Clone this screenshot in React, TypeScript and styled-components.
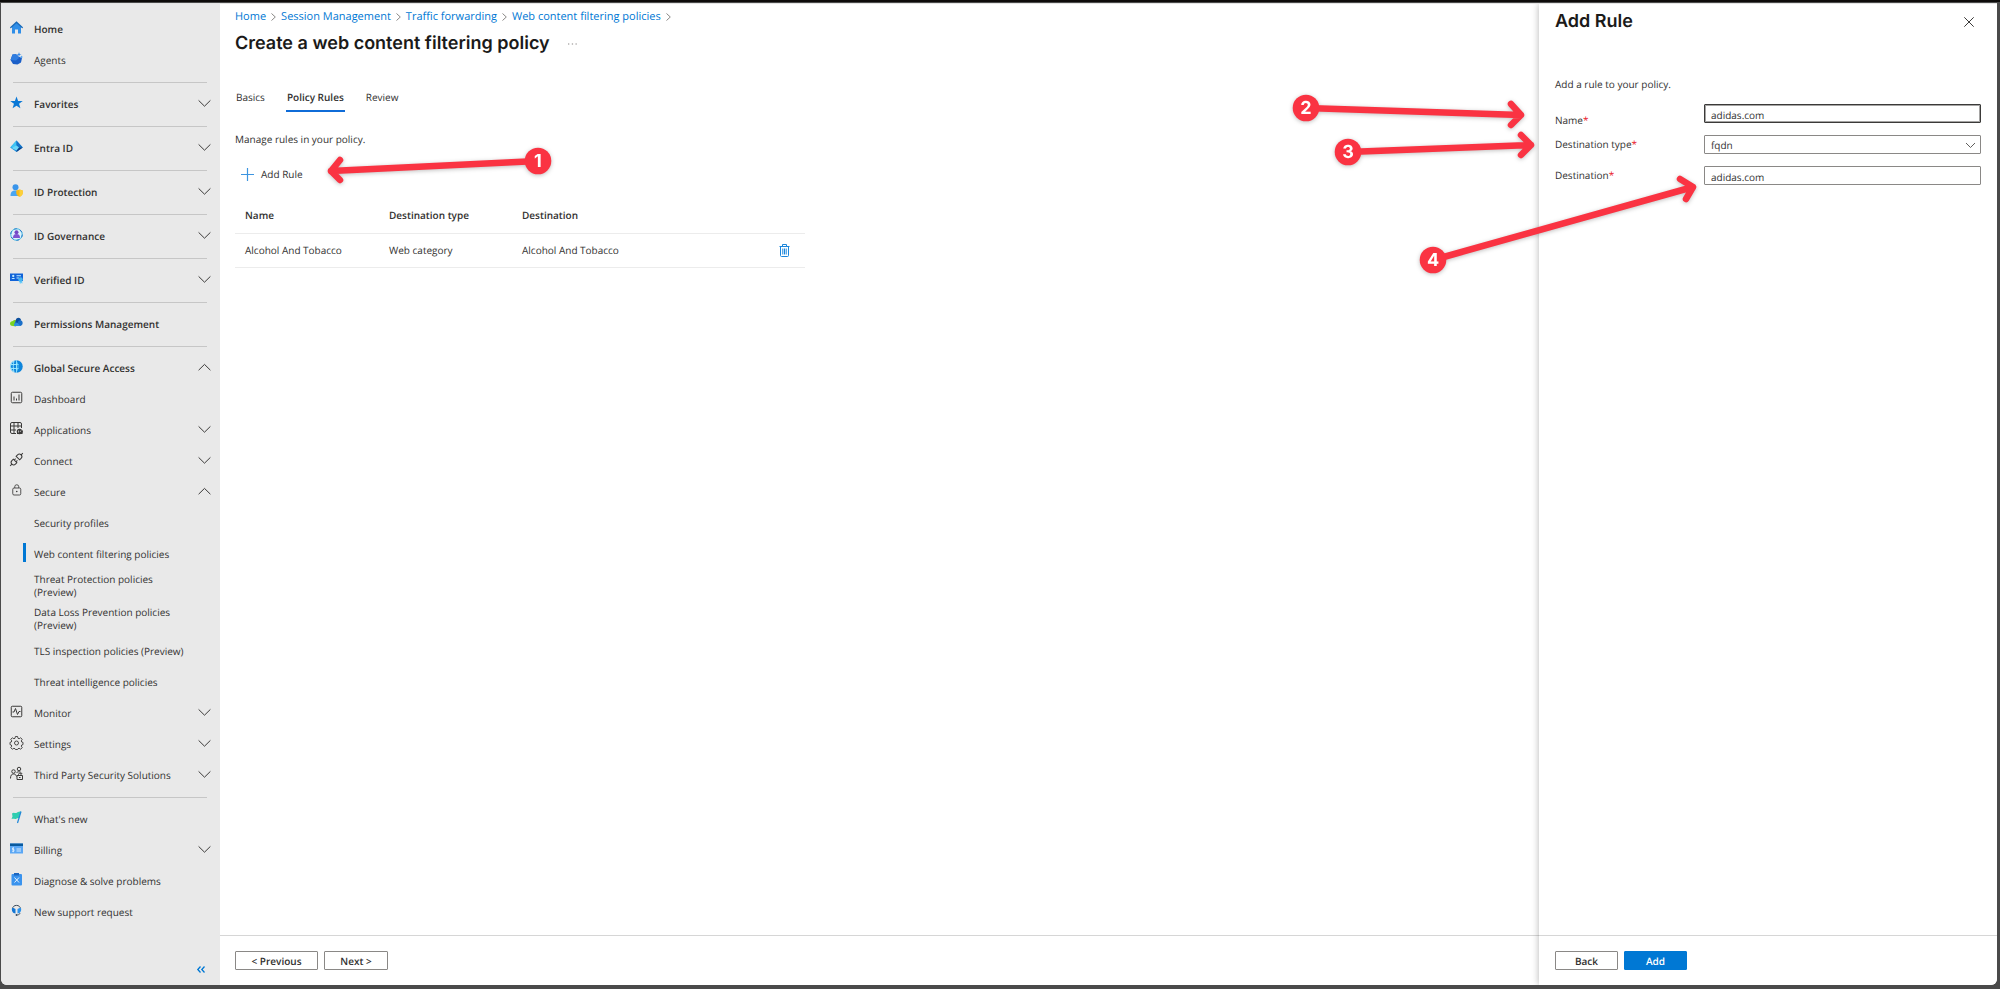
import React, { ReactNode } from "react";
import styled, { createGlobalStyle, css } from "styled-components";

const GlobalStyle = createGlobalStyle`
  *, *::before, *::after { box-sizing: border-box; }
  body {
    margin: 0;
    background: #2b2a29;
    color: #323130;
    font-family: "Open Sans", "Noto Sans", sans-serif;
    font-size: 10px;
    line-height: 13px;
    text-rendering: geometricPrecision;
  }
  button, input, select { font: inherit; color: inherit; text-rendering: inherit; }
`;

const Frame = styled.div`
  min-height: 100vh;
  padding: 3px 3px 4px 1px;
  display: flex;
  background: linear-gradient(#0d0b0a 0 2px, #4a4a4a 2px 100%);
`;

const Shell = styled.div`
  flex: 1;
  min-width: 0;
  display: flex;
  background: #fff;
  border-top: 1px solid #e4e4e4;
  border-radius: 0 0 6px 6px;
  overflow: hidden;
  position: relative;
`;

/* ---------- Sidebar ---------- */

const Sidebar = styled.nav`
  flex: 0 0 219px;
  display: flex;
  flex-direction: column;
  background: #e9e9e9;
  padding: 9px 9px 8px;
`;

const NavList = styled.ul`
  list-style: none;
  margin: 0;
  padding: 0;
`;

const NavItem = styled.li<{ $divided?: boolean }>`
  ${(p) =>
    p.$divided &&
    css`
      &::before {
        content: "";
        display: block;
        height: 1px;
        margin: 7px 4px 5px 3px;
        background: #c6c6c6;
      }
    `}
`;

const NavLink = styled.a<{ $strong?: boolean; $active?: boolean }>`
  display: flex;
  align-items: center;
  min-height: 31px;
  padding: 3px 0;
  color: #323130;
  text-decoration: none;
  font-weight: ${(p) => (p.$strong ? 600 : 400)};
  position: relative;
  ${(p) =>
    p.$active &&
    css`
      &::before {
        content: "";
        position: absolute;
        left: 13px;
        top: 5px;
        width: 3px;
        height: 19px;
        background: #0078d4;
      }
    `}
`;

const IconSlot = styled.span`
  flex: 0 0 13px;
  height: 15px;
  margin-right: 11px;
`;

const NavText = styled.span`
  flex: 1;
  padding-top: 1px;
`;

const CollapseButton = styled.button`
  margin: auto 2px 0 auto;
  padding: 4px;
  border: 0;
  background: none;
  display: flex;
`;

const Svg = styled.svg`
  display: block;
  overflow: visible;
`;

const Icon = ({ children, size = 13 }: { children: ReactNode; size?: number }) => (
  <Svg width={size} height={size} viewBox="0 0 26 26" fill="none" aria-hidden="true">
    {children}
  </Svg>
);

const Chevron = ({ up }: { up?: boolean }) => (
  <Svg width="13" height="10" viewBox="0 0 13 10" fill="none" stroke="#3b3a39" aria-hidden="true">
    <path d={up ? "M.6 7.2 6.5 1.4l5.9 5.8" : "M.6 1.4 6.5 7.2l5.9-5.8"} />
  </Svg>
);

const line = { stroke: "#3b3a39", strokeWidth: 2 };

const icons: Record<string, ReactNode> = {
  home: (
    <Icon>
      <path d="M4 11 13 3l9 8v14h-6v-8h-6v8H4z" fill="#2f8ee8" />
      <path d="M1.5 13 13 2.5 24.5 13" stroke="#1668b8" strokeWidth="2.6" strokeLinecap="round" />
    </Icon>
  ),
  agents: (
    <Icon>
      <path d="m5 5 9-1 5 6 5 2-2 9-7 4-9-1-5-8z" fill="#1b5fc8" />
      <path d="m5 5 9-1 4 8-6 5-11-1z" fill="#2f7de0" />
      <path d="m18 0 1.500 3.500L23 5l-3.500 1.500L18 10l-1.500-3.500L13 5l3.500-1.500z" fill="#2f86ea" stroke="#e9e9e9" strokeWidth=".8" />
      <path d="m23 7 1 2 2 1-2 1-1 2-1-2-2-1 2-1z" fill="#49a0f2" />
    </Icon>
  ),
  star: (
    <Icon>
      <path d="m13 1 3.200 8.800 9.300.2-7.400 5.600 2.700 9L13 19.300l-7.800 5.300 2.700-9L.5 10l9.300-.2z" fill="#0a78d6" />
    </Icon>
  ),
  entra: (
    <Icon>
      <path d="M13 1 25.500 15 13 24 .5 15z" fill="#1b8fe0" />
      <path d="M13 1v14L.5 15z" fill="#3fc4f4" />
      <path d="m13 1 12.500 14L13 15z" fill="#1673c8" />
      <path d="M13 15h12.500L13 24z" fill="#0b3f87" />
      <path d="m3 16 10-5 5 4-5 6z" fill="#6ad6f8" />
    </Icon>
  ),
  protection: (
    <Icon>
      <circle cx="11" cy="6.500" r="6" fill="#3a95ea" />
      <path d="M1 24c0-8 3-11 10-11s8 5 8 11z" fill="#49a6f2" />
      <path d="m19 11 6.500 2v5c0 4-3 6-6.500 7.500C15.500 24 12.500 22 12.500 18v-5z" fill="#f9b716" />
      <path d="m19 11 6.500 2v5c0 4-3 6-6.500 7.500z" fill="#fcd03a" />
    </Icon>
  ),
  governance: (
    <Icon>
      <circle cx="13" cy="13" r="11.500" fill="#dff3fb" stroke="#3eb8e4" strokeWidth="2" />
      <circle cx="13" cy="13" r="11.500" stroke="#2a7ac8" strokeWidth="2" strokeDasharray="6 6" />
      <circle cx="13" cy="8.500" r="4" fill="#7446c4" />
      <path d="M6 20c0-5 2-8 7-8s7 3 7 8z" fill="#7f52d0" />
    </Icon>
  ),
  verified: (
    <Icon>
      <path d="M0 3h26v15H0z" fill="#0f62d8" />
      <circle cx="6.500" cy="8" r="2.300" fill="#bfeaff" />
      <path d="M3 14c0-3 7-3 7 0zM13 6.500h9v2h-9zM13 11h5v2h-5z" fill="#bfeaff" />
      <path d="m18 17 2 7 2-2 3 1-1-7z" fill="#6fcdf8" />
      <circle cx="21" cy="15" r="4.500" fill="#45b4f0" />
    </Icon>
  ),
  permissions: (
    <Icon>
      <path d="M6 20C1 20 0 17 0 15c0-3 3-5 6-5 2-4 10-2 9 3l-3 8z" fill="#79d321" />
      <path d="M10 20c-2-5 0-9 2-11 2-4 8-4 10 0 4 1 4 7 2 9l-3 2z" fill="#1b6fc8" />
      <path d="M13 5c4-3 8-1 9 3-4 0-6 2-7 6-4-1-5-5-2-9z" fill="#0d4f9e" />
      <path d="M8 20c-1-5 3-7 7-6l6 6z" fill="#2f8ee0" />
    </Icon>
  ),
  global: (
    <Icon>
      <circle cx="13" cy="13" r="12.500" fill="#0f86dc" />
      <path d="M8 1.800A12.500 12.500 0 0 0 8 24.300M13 .5v25M1 9h16M1 17h16M8 2c-2 7-2 15 0 22" stroke="#a6ecff" strokeWidth="1.800" />
      <path d="M13 3c4 6 4 14 0 20" stroke="#6bd0f6" strokeWidth="1.600" />
    </Icon>
  ),
  dashboard: (
    <Icon>
      <rect x="2.500" y="2.500" width="21" height="21" rx="2.500" {...line} />
      <path d="M8 11v8M13 15v4M18 7v12" {...line} />
    </Icon>
  ),
  applications: (
    <Icon>
      <path d="M12 23H4a3 3 0 0 1-3-3V4a3 3 0 0 1 3-3h16a3 3 0 0 1 3 3v8M8 1v22M16 1v11M1 8h22M1 16h11" {...line} />
      <path d="M16 17h-2v7h11l1-7h-3" fill="#3b3a39" />
      <circle cx="19" cy="19" r="5.500" fill="#3b3a39" />
      <path d="M17 21v-4M20 20l2-3" stroke="#e9e9e9" strokeWidth="1.400" />
    </Icon>
  ),
  connect: (
    <Icon>
      <g transform="rotate(45 13 13)" {...line}>
        <path d="M8 9h10V5a5 5 0 0 0-10 0zM13 0v-5M8 17h10v4a5 5 0 0 1-10 0zM13 26v5M10.500 17v-4M15.500 17v-4" />
      </g>
    </Icon>
  ),
  secure: (
    <Icon>
      <rect x="5.500" y="8" width="16" height="14" rx="2.500" {...line} strokeWidth={1.700} />
      <path d="M9.500 8V5.500a4 4 0 0 1 8 0V8" {...line} strokeWidth={1.700} />
      <circle cx="13.500" cy="15" r="1.600" fill="#3b3a39" />
    </Icon>
  ),
  monitor: (
    <Icon>
      <rect x="2.500" y="2.500" width="21" height="21" rx="2" {...line} />
      <path d="M5 14h3l3-7 4 12 3-6h3" {...line} />
    </Icon>
  ),
  settings: (
    <Icon>
      <path
        d="M10.800 1h4.400l.8 3.600 2.200.9 3.100-2 3.200 3.200-2 3.100.9 2.200 2.600.8v4.400l-2.600.8-.9 2.200 2 3.100-3.200 3.200-3.100-2-2.200.9-.8 1.600h-4.400l-.8-1.600-2.200-.9-3.100 2-3.200-3.200 2-3.100-.9-2.200L0 17.200v-4.400l2.600-.8.9-2.200-2-3.100 3.200-3.200 3.100 2 2.200-.9z"
        stroke="#3b3a39"
        strokeWidth="1.800"
        strokeLinejoin="round"
      />
      <circle cx="13" cy="14" r="4" stroke="#3b3a39" strokeWidth="1.800" />
    </Icon>
  ),
  thirdparty: (
    <Icon>
      <circle cx="7" cy="9" r="3.500" {...line} />
      <circle cx="18" cy="4" r="3.500" {...line} />
      <path d="M1 23c0-6 2-9 6-9s5 2 6 5M13 12c1-3 9-4 11 2" {...line} />
      <path d="M14 17h11v8H14zM17 17v-2a2.500 2.500 0 0 1 5 0v2" {...line} />
      <path d="M18 21h3" {...line} />
    </Icon>
  ),
  whatsnew: (
    <Icon>
      <path d="M4 5c4-4 7 1 10-2 3-2 5-2 8-2l-4 13c-5-1-5 3-8 2s-5 0-7 0l2-5z" fill="#2fcdb0" />
      <path d="m22 1-7 23" stroke="#1f87d8" strokeWidth="2.400" />
    </Icon>
  ),
  billing: (
    <Icon>
      <path d="M0 3h26v20H0z" fill="#5aa7f5" />
      <path d="M0 3h26v5H0z" fill="#0a5a9e" />
      <path d="M13 13h9v2h-9zM13 17h9v2h-9z" fill="#d6ecff" />
      <path d="M8 12H5v3h3v3.500H4M6.500 10.500v10" stroke="#e8f4ff" strokeWidth="1.500" />
    </Icon>
  ),
  diagnose: (
    <Icon>
      <rect x="3" y="2" width="21" height="23" rx="2" fill="#3a93ee" />
      <path d="M8 0h10v5H8z" fill="#1d66c0" />
      <path d="m9 9 9 10M18 9 9 19" stroke="#e6f3ff" strokeWidth="2" />
    </Icon>
  ),
  support: (
    <Icon>
      <path d="M5 11C4 0 22 0 21 11" stroke="#3b4a5a" strokeWidth="2" />
      <path d="M4 8h3l4 2v9l-4-1c-3-2-4-7-3-10z" fill="#1476d4" />
      <path d="M22 8h-3l-4 2v9l4-1c3-2 4-7 3-10z" fill="#2f93ea" />
      <path d="M20 18c0 3-3 4-7 4" stroke="#3b4a5a" strokeWidth="1.600" />
      <circle cx="13" cy="22" r="1.800" fill="#3b4a5a" />
    </Icon>
  ),
};

type NavEntry = {
  label: ReactNode;
  icon?: string;
  strong?: boolean;
  divided?: boolean;
  active?: boolean;
  chevron?: "up" | "down";
};

const entries: NavEntry[] = [
  { label: "Home", icon: "home", strong: true },
  { label: "Agents", icon: "agents" },
  { label: "Favorites", icon: "star", strong: true, divided: true, chevron: "down" },
  { label: "Entra ID", icon: "entra", strong: true, divided: true, chevron: "down" },
  { label: "ID Protection", icon: "protection", strong: true, divided: true, chevron: "down" },
  { label: "ID Governance", icon: "governance", strong: true, divided: true, chevron: "down" },
  { label: "Verified ID", icon: "verified", strong: true, divided: true, chevron: "down" },
  { label: "Permissions Management", icon: "permissions", strong: true, divided: true },
  { label: "Global Secure Access", icon: "global", strong: true, divided: true, chevron: "up" },
  { label: "Dashboard", icon: "dashboard" },
  { label: "Applications", icon: "applications", chevron: "down" },
  { label: "Connect", icon: "connect", chevron: "down" },
  { label: "Secure", icon: "secure", chevron: "up" },
  { label: "Security profiles" },
  { label: "Web content filtering policies", active: true },
  { label: <>Threat Protection policies<br />(Preview)</> },
  { label: <>Data Loss Prevention policies<br />(Preview)</> },
  { label: "TLS inspection policies (Preview)" },
  { label: "Threat intelligence policies" },
  { label: "Monitor", icon: "monitor", chevron: "down" },
  { label: "Settings", icon: "settings", chevron: "down" },
  { label: "Third Party Security Solutions", icon: "thirdparty", chevron: "down" },
  { label: "What's new", icon: "whatsnew", divided: true },
  { label: "Billing", icon: "billing", chevron: "down" },
  { label: "Diagnose & solve problems", icon: "diagnose" },
  { label: "New support request", icon: "support" },
];

/* ---------- Main ---------- */

const Column = styled.div`
  display: flex;
  flex-direction: column;
`;

const Main = styled(Column).attrs({ as: "main" })`
  flex: 1;
  min-width: 0;
  position: relative;
`;

const MainBody = styled.div`
  flex: 1;
  padding: 5px 15px 0;
`;

const Breadcrumbs = styled.nav`
  display: flex;
  align-items: center;
  gap: 5px;
  font-size: 11px;
  line-height: 15px;
  a { color: #0078d4; text-decoration: none; }
`;

const TitleRow = styled.div`
  display: flex;
  align-items: center;
  gap: 18px;
  margin-top: 9px;
`;

const Title = styled.h1`
  margin: 0;
  font: 600 18px/22px Inter, sans-serif;
  color: #1b1a19;
`;

const PlainButton = styled.button`
  display: inline-flex;
  align-items: center;
  padding: 0;
  border: 0;
  background: none;
  vertical-align: middle;
  cursor: pointer;
`;

const Tabs = styled.div`
  display: flex;
  gap: 20px;
  margin: 35px 0 21px;
`;

const Tab = styled(PlainButton)<{ $selected?: boolean }>`
  height: 22px;
  padding: 0 1px 5px;
  border-bottom: 2px solid ${(p) => (p.$selected ? "#0f6cd8" : "transparent")};
  font-weight: ${(p) => (p.$selected ? 600 : 400)};
`;

const Paragraph = styled.p`
  margin: 0;
`;

const AddRule = styled(PlainButton)`
  gap: 7px;
  margin: 15px 0 0 6px;
  height: 26px;
`;

const RulesTable = styled.table`
  width: 570px;
  margin-top: 12px;
  border-collapse: collapse;
  table-layout: fixed;
  th, td {
    height: 34px;
    padding: 0 10px;
    border-bottom: 1px solid #ececec;
    text-align: left;
    font-weight: 400;
  }
  th { font-weight: 600; }
`;

const Footer = styled.footer<{ $inset: number }>`
  display: flex;
  gap: 6px;
  height: 50px;
  padding: 15px ${(p) => p.$inset}px 0;
  border-top: 1px solid #d6d6d6;
`;

const ActionButton = styled.button<{ $primary?: boolean; $width: number }>`
  width: ${(p) => p.$width}px;
  height: 19px;
  padding: 1px 0 0;
  border: 1px solid ${(p) => (p.$primary ? "#0078d4" : "#8a8886")};
  border-radius: 1px;
  background: ${(p) => (p.$primary ? "#0078d4" : "#fff")};
  color: ${(p) => (p.$primary ? "#fff" : "#323130")};
  font-weight: 600;
  line-height: 15px;
`;

/* ---------- Panel ---------- */

const Panel = styled(Column).attrs({ as: "aside" })`
  flex: 0 0 458px;
  background: #fff;
  position: relative;
  box-shadow: 0 0 7px rgba(0, 0, 0, 0.3);
`;

const PanelBody = styled.div`
  flex: 1;
  padding: 7px 16px 0;
`;

const PanelHeader = styled.header`
  display: flex;
  align-items: center;
  justify-content: space-between;
  padding-right: 7px;
  margin-bottom: 45px;
`;

const Form = styled.form`
  display: flex;
  flex-direction: column;
  gap: 12px;
  margin-top: 13px;
`;

const Field = styled.div`
  display: flex;
  align-items: center;
  height: 19px;
  label { flex: 0 0 149px; }
`;

const LowLabel = styled.label`
  padding-top: 14px;
`;

const Required = styled.span`
  color: #e81123;
`;

const control = css`
  flex: 1;
  min-width: 0;
  width: 100%;
  height: 19px;
  padding: 2px 6px 0;
  border: 1px solid #8a8886;
  border-radius: 1px;
  background: #fff;
  outline: 0;
`;

const TextInput = styled.input<{ $focused?: boolean }>`
  ${control}
  ${(p) =>
    p.$focused &&
    css`
      border-color: #3b3a39;
      box-shadow: inset 0 0 0 1px #a5a4a3;
    `}
`;

const SelectWrap = styled.div`
  flex: 1;
  position: relative;
  svg { position: absolute; right: 6px; top: 6px; pointer-events: none; }
`;

const Select = styled.select`
  ${control}
  display: block;
  appearance: none;
`;

/* ---------- Callouts ---------- */

const Callout = styled.svg`
  position: absolute;
  overflow: visible;
  pointer-events: none;
  filter: drop-shadow(0 1px 2px rgba(0, 0, 0, 0.25));
  z-index: 2;
  text {
    font: 700 18px Inter, sans-serif;
    fill: #fff;
    text-anchor: middle;
  }
`;

const LeftCallout = styled(Callout)`
  left: 0;
  top: 0;
`;

const RightCallout = styled(Callout)`
  right: 0;
  top: 0;
`;

const Arrow = ({ n, from, to, wings }: { n: number; from: [number, number]; to: [number, number]; wings: [number, number][] }) => (
  <g>
    <path
      d={`M${from} L${to} M${wings[0]} L${to} L${wings[1]}`}
      fill="none"
      stroke="#fa3342"
      strokeWidth="6.500"
      strokeLinecap="round"
      strokeLinejoin="round"
    />
    <circle cx={from[0]} cy={from[1]} r="13.300" fill="#fa3342" />
    <text x={from[0]} y={from[1] + 6}>{n}</text>
  </g>
);

const crumbs = ["Home", "Session Management", "Traffic forwarding", "Web content filtering policies"];

export default function App() {
  return (
    <>
      <GlobalStyle />
      <Frame>
        <Shell>
          <Sidebar aria-label="Entra navigation">
            <NavList>
              {entries.map((e, i) => (
                <NavItem key={i} $divided={e.divided}>
                  <NavLink href="#" $strong={e.strong} $active={e.active}>
                    <IconSlot>{e.icon && icons[e.icon]}</IconSlot>
                    <NavText>{e.label}</NavText>
                    {e.chevron && <Chevron up={e.chevron === "up"} />}
                  </NavLink>
                </NavItem>
              ))}
            </NavList>
            <CollapseButton aria-label="Collapse menu">
              <Svg width="8" height="7" viewBox="0 0 8 7" fill="none" stroke="#0078d4" strokeWidth="1.300">
                <path d="M3.500.5.800 3.500l2.700 3M7.500.5 4.800 3.500l2.700 3" />
              </Svg>
            </CollapseButton>
          </Sidebar>

          <Main>
            <MainBody>
              <Breadcrumbs aria-label="Breadcrumb">
                {crumbs.map((c) => (
                  <React.Fragment key={c}>
                    <a href="#">{c}</a>
                    <Svg width="5" height="8" viewBox="0 0 5 8" fill="none" stroke="#8a8886">
                      <path d="m.5.500 3.800 3.500L.5 7.500" />
                    </Svg>
                  </React.Fragment>
                ))}
              </Breadcrumbs>
              <TitleRow>
                <Title>Create a web content filtering policy</Title>
                <PlainButton aria-label="More">
                  <Svg width="9" height="2" viewBox="0 0 9 2" fill="#8a8886">
                    <path d="M0 .5h1.300v1H0zM3.800.5h1.300v1H3.800zM7.500.5h1.300v1H7.500z" />
                  </Svg>
                </PlainButton>
              </TitleRow>
              <Tabs role="tablist">
                <Tab role="tab">Basics</Tab>
                <Tab role="tab" aria-selected $selected>Policy Rules</Tab>
                <Tab role="tab">Review</Tab>
              </Tabs>
              <Paragraph>Manage rules in your policy.</Paragraph>
              <AddRule>
                <Svg width="13" height="13" viewBox="0 0 13 13" stroke="#3d95e0" strokeWidth="1.200">
                  <path d="M6.500 0v13M0 6.500h13" />
                </Svg>
                Add Rule
              </AddRule>
              <RulesTable>
                <colgroup>
                  <col width="144" />
                  <col width="133" />
                  <col />
                  <col width="36" />
                </colgroup>
                <thead>
                  <tr>
                    <th>Name</th>
                    <th>Destination type</th>
                    <th>Destination</th>
                    <th aria-label="Actions" />
                  </tr>
                </thead>
                <tbody>
                  <tr>
                    <td>Alcohol And Tobacco</td>
                    <td>Web category</td>
                    <td>Alcohol And Tobacco</td>
                    <td>
                      <PlainButton aria-label="Delete rule">
                        <Svg width="11" height="13" viewBox="0 0 11 13" fill="none" stroke="#1a86dc">
                          <path d="M.5 2.500h10M3.500 2.500v-2h4v2M1.500 2.500v9a1 1 0 0 0 1 1h6a1 1 0 0 0 1-1v-9M3.800 4.500v6M5.500 4.500v6M7.200 4.500v6" />
                        </Svg>
                      </PlainButton>
                    </td>
                  </tr>
                </tbody>
              </RulesTable>
            </MainBody>
            <Footer $inset={15}>
              <ActionButton $width={83}>&lt; Previous</ActionButton>
              <ActionButton $width={64}>Next &gt;</ActionButton>
            </Footer>
            <LeftCallout width="340" height="200" viewBox="220 4 340 200">
              <Arrow n={1} from={[538, 161]} to={[331, 171]} wings={[[340, 160], [340, 180]]} />
            </LeftCallout>
          </Main>

          <Panel>
            <PanelBody>
              <PanelHeader>
                <Title as="h2">Add Rule</Title>
                <PlainButton aria-label="Close">
                  <Svg width="10" height="10" viewBox="0 0 10 10" stroke="#3b3a39">
                    <path d="m.3.300 9.400 9.400M9.700.300.300 9.700" />
                  </Svg>
                </PlainButton>
              </PanelHeader>
              <Paragraph>Add a rule to your policy.</Paragraph>
              <Form>
                <Field>
                  <LowLabel htmlFor="rule-name">Name<Required>*</Required></LowLabel>
                  <TextInput id="rule-name" defaultValue="adidas.com" $focused />
                </Field>
                <Field>
                  <label htmlFor="rule-type">Destination type<Required>*</Required></label>
                  <SelectWrap>
                    <Select id="rule-type" defaultValue="fqdn">
                      <option>fqdn</option>
                    </Select>
                    <Svg width="9" height="8" viewBox="0 0 9 8" fill="none" stroke="#605e5c">
                      <path d="m0 2 4.500 4.500L9 2" />
                    </Svg>
                  </SelectWrap>
                </Field>
                <Field>
                  <label htmlFor="rule-destination">Destination<Required>*</Required></label>
                  <TextInput id="rule-destination" defaultValue="adidas.com" />
                </Field>
              </Form>
            </PanelBody>
            <Footer $inset={16}>
              <ActionButton $width={63}>Back</ActionButton>
              <ActionButton $width={63} $primary>Add</ActionButton>
            </Footer>
          </Panel>

          <RightCallout width="717" height="280" viewBox="1280 4 717 280">
            <Arrow n={2} from={[1306, 108]} to={[1521, 115]} wings={[[1511, 104], [1511, 125]]} />
            <Arrow n={3} from={[1348, 152]} to={[1531, 145]} wings={[[1521, 135], [1521, 155]]} />
            <Arrow n={4} from={[1433, 260]} to={[1693, 187]} wings={[[1680, 179], [1686, 199]]} />
          </RightCallout>
        </Shell>
      </Frame>
    </>
  );
}
